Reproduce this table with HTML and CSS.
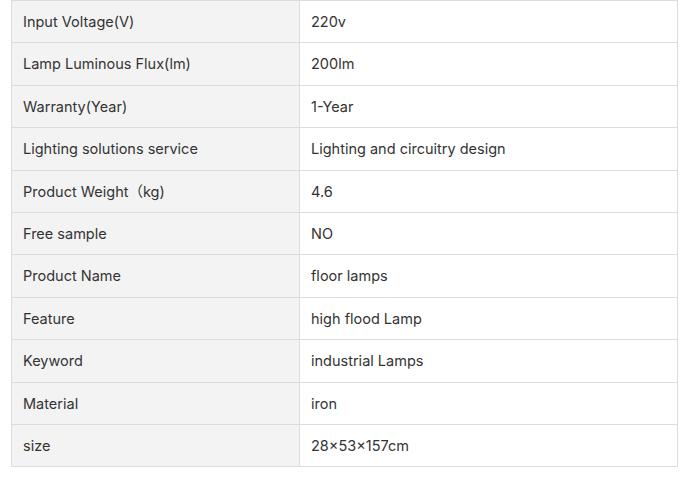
FILE: index.html
```html
<!DOCTYPE html>
<html>
<head>
<meta charset="utf-8">
<link rel="stylesheet" href="styles.css">
</head>
<body>
<div class="wrap">
<table class="spec">
<tbody>
<tr><td class="k">Input Voltage(V)</td><td class="v">220v</td></tr>
<tr><td class="k">Lamp Luminous Flux(lm)</td><td class="v">200lm</td></tr>
<tr><td class="k">Warranty(Year)</td><td class="v">1-Year</td></tr>
<tr><td class="k">Lighting solutions service</td><td class="v">Lighting and circuitry design</td></tr>
<tr><td class="k">Product Weight（kg)</td><td class="v">4.6</td></tr>
<tr><td class="k">Free sample</td><td class="v">NO</td></tr>
<tr><td class="k">Product Name</td><td class="v">floor lamps</td></tr>
<tr><td class="k">Feature</td><td class="v">high flood Lamp</td></tr>
<tr><td class="k">Keyword</td><td class="v">industrial Lamps</td></tr>
<tr><td class="k">Material</td><td class="v">iron</td></tr>
<tr><td class="k">size</td><td class="v">28×53×157cm</td></tr>
</tbody>
</table>
</div>
</body>
</html>
```
FILE: styles.css
```css
html, body {
  margin: 0;
  padding: 0;
  background: #fff;
}
.wrap {
  padding: 0 12px 0 11px;
}
.spec {
  width: 667px;
  border-collapse: collapse;
  font-family: Inter, "Noto Sans CJK SC", sans-serif;
  font-size: 14.5px;
  color: #333;
}
.spec td {
  border: 1px solid #dcdcdc;
  padding: 10px 11px;
  line-height: 21.4px;
  vertical-align: middle;
  text-align: left;
}
.spec .k {
  width: 265px;
  background: #f3f3f3;
}
.spec .v {
  background: #fff;
}
```
